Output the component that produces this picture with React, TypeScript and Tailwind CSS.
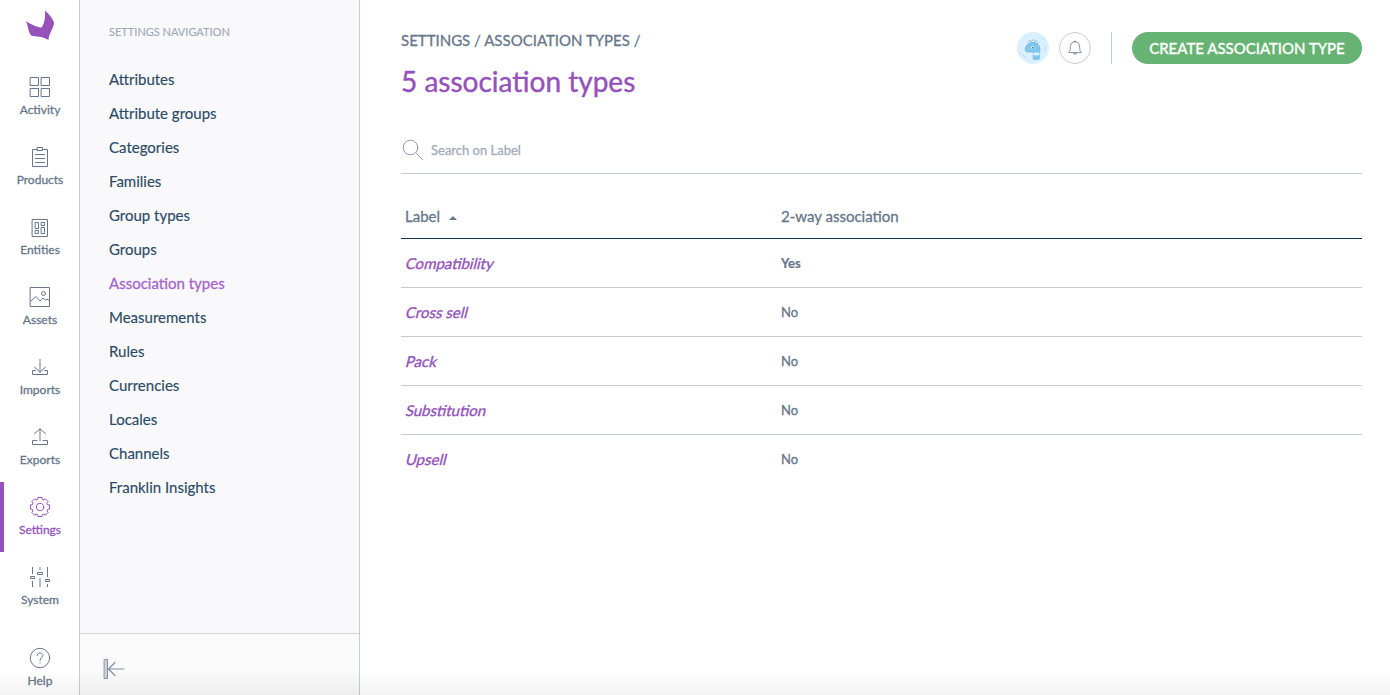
import type { ReactNode } from "react";

type IconProps = { children: ReactNode };

function Icon({ children }: IconProps) {
  return (
    <svg width="24" height="24" viewBox="0 0 24 24" fill="none" stroke="currentColor" strokeWidth="1" strokeLinecap="round" strokeLinejoin="round" className="block shrink-0">
      {children}
    </svg>
  );
}

function polar(radius: number, degrees: number) {
  const a = (degrees * Math.PI) / 180;
  return `${(12 + radius * Math.cos(a)).toFixed(2)} ${(12 + radius * Math.sin(a)).toFixed(2)}`;
}

const gearPath =
  Array.from({ length: 8 }, (_, i) => {
    const a = i * 45;
    return `${i === 0 ? "M" : "L"}${polar(8, a - 16)}L${polar(9.8, a - 12)}L${polar(9.8, a + 12)}L${polar(8, a + 16)}`;
  }).join("") + "Z";

const menu: { label: string; icon: ReactNode; active?: boolean }[] = [
  {
    label: "Activity",
    icon: <path d="M2.5 2.5h8v8h-8zM13.5 2.5h8v8h-8zM2.5 13.5h8v8h-8zM13.5 13.5h8v8h-8z" />,
  },
  {
    label: "Products",
    icon: <path d="M9 4.5H4.500v17h15v-17H15M9.500 2.500h5v3h-5zM7.500 9.500h9M7.500 13.500h9M7.500 17.500h9" />,
  },
  {
    label: "Entities",
    icon: <path d="M4.500 4.500h15v17h-15zM7.500 7.500h3v6h-3zM13.500 7.500h3v3h-3zM7.500 15.500h3v3h-3zM13.500 12.500h3v6h-3z" />,
  },
  {
    label: "Assets",
    icon: (
      <>
        <path d="M2.500 2.500h19v19h-19zM3 16l5-4.500 4 4.500 3-3 2.500 2 1.500-.8 2.500 1.500" />
        <circle cx="15.500" cy="8.500" r="2" />
      </>
    ),
  },
  {
    label: "Imports",
    icon: (
      <>
        <path d="M12 4.500V17" strokeWidth="1.600" strokeOpacity=".6" />
        <path d="M6.500 12l5.500 5 5.500-5M7.500 15.500h-3v4h15v-4h-3" />
      </>
    ),
  },
  {
    label: "Exports",
    icon: (
      <>
        <path d="M12 15.500V4" strokeWidth="1.600" strokeOpacity=".6" />
        <path d="M6.500 8.500L12 4l5.500 4.500M9 15.500H4.500v4h15v-4H15" />
      </>
    ),
  },
  {
    label: "Settings",
    active: true,
    icon: (
      <>
        <path d={gearPath} />
        <circle cx="12" cy="12" r="3.700" />
      </>
    ),
  },
  {
    label: "System",
    icon: (
      <>
        <path d="M4.500 2v7M4.500 16v6M19.500 2v10M19.500 19v3M2.500 11.500h4v2h-4zM17.500 14.500h4v2h-4zM9.500 7.500h5v2h-5z" strokeLinecap="butt" />
        <path d="M12 2v3M12 13v9" strokeWidth="2" strokeOpacity=".5" strokeLinecap="butt" />
      </>
    ),
  },
];

const settings = [
  "Attributes",
  "Attribute groups",
  "Categories",
  "Families",
  "Group types",
  "Groups",
  "Association types",
  "Measurements",
  "Rules",
  "Currencies",
  "Locales",
  "Channels",
  "Franklin Insights",
];

const rows = [
  { label: "Compatibility", twoWay: true },
  { label: "Cross sell", twoWay: false },
  { label: "Pack", twoWay: false },
  { label: "Substitution", twoWay: false },
  { label: "Upsell", twoWay: false },
];

function MainMenu() {
  return (
    <nav className="flex w-20 shrink-0 flex-col border-r border-[#c7cbd4] bg-white text-[#67768a]">
      <div className="flex h-[62px] justify-center pt-2.5">
        <svg width="30" height="31" viewBox="0 0 30 31" className="block">
          <path d="M.8 11C7 15 13 17.500 16.500 17.500C19.500 14 20.500 6 20 .5C24 4 27.500 8 29 12.500C29 18 23.500 24 23.500 30C19 27 14 26.500 8 26C3 25.500 4 17 .8 11Z" fill="#9452ba" />
        </svg>
      </div>
      {menu.map((item) => (
        <a
          key={item.label}
          className={
            item.active
              ? "flex h-[70px] flex-col items-center border-l-4 border-[#9452ba] pt-[13px] pr-1 text-[#9452ba]"
              : "flex h-[70px] flex-col items-center pt-[13px]"
          }
        >
          <Icon>{item.icon}</Icon>
          <span className="mt-0.5 pl-px text-[12px] leading-[18px] [-webkit-text-stroke:0.3px]">{item.label}</span>
        </a>
      ))}
      <a className="mt-auto flex h-[49px] flex-col items-center">
        <Icon>
          <circle cx="12" cy="12" r="9.700" />
          <path d="M9.200 9.500c0-3.500 5.700-3.500 5.700 0 0 2-2.900 2.200-2.900 5M12 16.800v.4" />
        </Icon>
        <span className="mt-0.5 pl-px text-[12px] leading-[18px] [-webkit-text-stroke:0.3px]">Help</span>
      </a>
    </nav>
  );
}

function SettingsPanel() {
  return (
    <aside className="flex w-[280px] shrink-0 flex-col border-r border-[#c7cbd4] bg-[#f9f9fb]">
      <div className="flex-1 pt-[23px] pl-[29px]">
        <h2 className="text-[11px] leading-[18px] text-[#a1a9b7] [-webkit-text-stroke:0.15px]">SETTINGS NAVIGATION</h2>
        <ul className="mt-[21px] text-[15px] leading-[34px] [-webkit-text-stroke:0.15px]">
          {settings.map((label) => (
            <li
              key={label}
              className={label === "Association types" ? "h-[34px] text-[#a765ca] [-webkit-text-stroke:0.3px]" : "h-[34px] text-[#2b4a66]"}
            >
              {label}
            </li>
          ))}
        </ul>
      </div>
      <div className="flex h-[62px] items-start border-t border-[#d3d6dd] bg-[#fafafa] pt-[23px] pl-[22px] text-[#8490a1]">
        <Icon>
          <path d="M2.500 2.500h3v19h-3z" fill="#cdd2da" />
          <path d="M22 12H6M13 5.500L6.500 12l6.500 6.500" strokeWidth="1.200" />
        </Icon>
      </div>
    </aside>
  );
}

function Avatar() {
  return (
    <svg width="32" height="32" viewBox="0 0 32 32" className="block">
      <circle cx="16" cy="16" r="16" fill="#dbf0fe" />
      <g stroke="#6aaed8" strokeWidth=".6" strokeLinejoin="round">
        <circle cx="13" cy="9.800" r="1.400" fill="#edf8ff" />
        <circle cx="16.200" cy="9.300" r="1.400" fill="#edf8ff" />
        <circle cx="19.400" cy="10.200" r="1.400" fill="#edf8ff" />
        <path d="M8.200 18C8 13.500 11.500 10.500 16 10.500C20.500 10.500 23 13.500 23 17L22.300 27Q19 28 16 27L16.500 20H10.500Q8.500 20 8.200 18Z" fill="#82c8ee" />
        <path d="M16.600 20.800H22.500L22.400 23.200H16.400Z" fill="#e4f4fd" stroke="none" />
        <circle cx="15.500" cy="15.500" r="1.200" fill="#fff" stroke="none" />
      </g>
      <circle cx="15.700" cy="15.700" r=".7" fill="#26445d" />
      <path d="M28 14c.5 2 .2 4-.6 6M3 20l1 1.800M6 23l4 3.500M8.500 3v1M25 7l1 1" stroke="#a3cfe9" strokeWidth=".7" fill="none" />
    </svg>
  );
}

function Header() {
  return (
    <header className="flex h-[104px] justify-between">
      <div className="pt-[30px]">
        <div className="text-[15px] leading-5 text-[#67768a] [-webkit-text-stroke:0.3px]">SETTINGS / ASSOCIATION TYPES /</div>
        <h1 className="mt-[14px] text-[28px] leading-[34px] text-[#9452ba] [-webkit-text-stroke:0.4px]">5 association types</h1>
      </div>
      <div className="box-content flex h-8 items-center pt-8">
        <Avatar />
        <button className="ml-2.5 flex size-8 items-center justify-center rounded-full border border-[#c7cbd4] text-[#67768a]">
          <svg width="16" height="16" viewBox="0 0 16 16" fill="none" stroke="currentColor" strokeWidth=".8" strokeLinejoin="round">
            <path d="M7 1.900C7 .8 9 .8 9 1.900M1.800 12.600H14.200V12C12.600 11.200 12.800 9.500 12.600 6.500C12.400 3.500 10.500 1.900 8 1.900C5.500 1.900 3.600 3.500 3.400 6.500C3.200 9.500 3.400 11.200 1.800 12ZM6.300 12.800C6.500 14.800 9.500 14.800 9.700 12.800" />
          </svg>
        </button>
        <div className="ml-5 h-8 w-px bg-[#c7cbd4]" />
        <button className="ml-5 h-8 w-[230px] rounded-full bg-[#67b373] text-[15px] leading-8 text-white [-webkit-text-stroke:0.4px]">
          CREATE ASSOCIATION TYPE
        </button>
      </div>
    </header>
  );
}

function AssociationTable() {
  return (
    <div className="mt-[22px] text-[#67768a]">
      <div className="flex h-[43px] items-center border-b border-[#11324d] pb-0.5 pl-1 text-[15px] leading-5 [-webkit-text-stroke:0.3px]">
        <div className="flex w-[376px] items-center">
          Label
          <svg width="8" height="4" viewBox="0 0 8 4" className="mt-[3px] ml-[9px]">
            <path d="M0 4L4 0l4 4z" fill="#67768a" />
          </svg>
        </div>
        <div>2-way association</div>
      </div>
      {rows.map((row) => (
        <div key={row.label} className="flex h-[49px] items-center border-b border-[#c7cbd4] pl-1 last:border-b-transparent">
          <div className="w-[376px] text-[15px] leading-5 text-[#9452ba] [-webkit-text-stroke:0.35px]">
            <span className="inline-block origin-[0_75%] -skew-x-[14deg]">{row.label}</span>
          </div>
          <div className={row.twoWay ? "text-[13px] leading-5 font-bold [-webkit-text-stroke:0.2px]" : "text-[13px] leading-5 [-webkit-text-stroke:0.3px]"}>
            {row.twoWay ? "Yes" : "No"}
          </div>
        </div>
      ))}
    </div>
  );
}

export default function App() {
  return (
    <div className="relative flex h-[695px] w-[1390px] overflow-hidden bg-white font-['Lato',sans-serif]">
      <MainMenu />
      <SettingsPanel />
      <main className="flex-1 pr-7 pl-[41px]">
        <Header />
        <div className="mt-[22px] flex h-12 items-center border-b border-[#c7cbd4] text-[#a1a9b7]">
          <Icon>
            <circle cx="9.500" cy="9.500" r="7.300" stroke="#8c97a8" />
            <path d="M14.700 14.700l7 7" stroke="#8c97a8" />
          </Icon>
          <span className="ml-1.5 text-[13px] leading-5 [-webkit-text-stroke:0.25px]">Search on Label</span>
        </div>
        <AssociationTable />
      </main>
      <div className="pointer-events-none absolute inset-x-0 bottom-0 h-6 bg-linear-to-t from-black/5 to-transparent" />
    </div>
  );
}
